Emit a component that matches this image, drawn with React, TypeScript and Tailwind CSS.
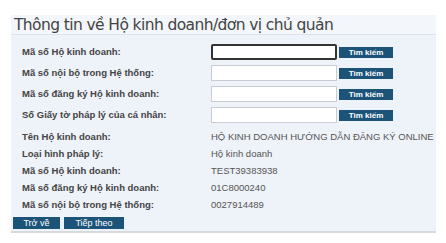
import React from "react";

const searchRows = [
  "Mã số Hộ kinh doanh:",
  "Mã số nội bộ trong Hệ thống:",
  "Mã số đăng ký Hộ kinh doanh:",
  "Số Giấy tờ pháp lý của cá nhân:",
];

const infoRows = [
  ["Tên Hộ kinh doanh:", "HỘ KINH DOANH HƯỚNG DẪN ĐĂNG KÝ ONLINE"],
  ["Loại hình pháp lý:", "Hộ kinh doanh"],
  ["Mã số Hộ kinh doanh:", "TEST39383938"],
  ["Mã số đăng ký Hộ kinh doanh:", "01C8000240"],
  ["Mã số nội bộ trong Hệ thống:", "0027914489"],
];

const App = () => {
  return (
    <div className="w-[446px] h-[243px] bg-white pt-[15px] pl-[11px] font-['Liberation_Sans',Arial,sans-serif]">
      <div className="w-[425px] h-[218px] bg-[#eef2f9] border-b-2 border-[#d6d9de] flex flex-col">
        <div className="h-[20px] bg-[#f3f6fb] border-b border-[#dde3ec] pl-[3px] leading-[20px] text-[15.5px] text-[#444] font-['DejaVu_Sans',Verdana,sans-serif] tracking-[-0.6px]">
          Thông tin về Hộ kinh doanh/đơn vị chủ quản
        </div>
        <div className="flex flex-col pt-[9px] pl-[11px] gap-[5px]">
          {searchRows.map((label, i) => (
            <div key={i} className="flex items-center h-[16px]">
              <div className="w-[189px] text-[9.5px] font-bold text-[#444]">{label}</div>
              <input
                className={
                  i === 0
                    ? "w-[126px] h-[16px] bg-white border-2 border-[#333] rounded-[2px] outline-none"
                    : "w-[126px] h-[16px] bg-white border border-[#c9cdd3] outline-none"
                }
              />
              <button className="ml-[2px] w-[54px] h-[11px] bg-[#1c5379] text-white text-[8px] font-bold leading-[11px] text-center">
                Tìm kiếm
              </button>
            </div>
          ))}
        </div>
        <div className="flex flex-col pl-[11px] mt-[5px]">
          {infoRows.map(([label, value], i) => (
            <div key={i} className={`flex items-center ${i === 0 ? "h-[18px]" : "h-[17px]"}`}>
              <div className="w-[189px] text-[9.5px] font-bold text-[#444]">{label}</div>
              <div className="text-[9.5px] text-[#555]">{value}</div>
            </div>
          ))}
        </div>
        <div className="flex gap-[4px] pl-[2px] mt-[3px]">
          <button className="w-[47px] h-[12px] bg-[#1c5379] text-white text-[9px] leading-[12px]">Trở về</button>
          <button className="w-[60px] h-[12px] bg-[#1c5379] text-white text-[9px] leading-[12px]">Tiếp theo</button>
        </div>
      </div>
    </div>
  );
};

export default App;
